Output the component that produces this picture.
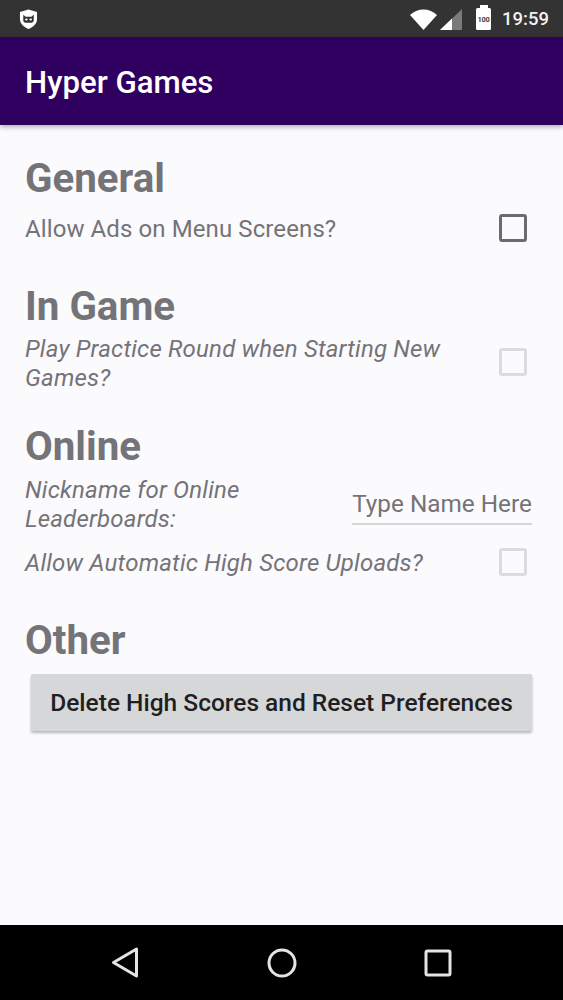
<script>
</script>

<div class="phone">
  <header class="status">
    <svg class="shield" viewBox="0 0 20 22" width="19" height="22">
      <path d="M10 1 L19 3.5 V11 C19 16 15 19.5 10 21.5 C5 19.5 1 16 1 11 V3.5 Z" fill="#fff"/>
      <path d="M4.5 6.5 L7 8.5 H13 L15.5 6.5 V12.5 C15.5 14 14 15 12 15 H8 C6 15 4.5 14 4.5 12.5 Z" fill="#333"/>
      <rect x="6.5" y="10.5" width="2.6" height="2" rx="1" fill="#fff"/>
      <rect x="11" y="10.5" width="2.6" height="2" rx="1" fill="#fff"/>
    </svg>
    <div class="status-right">
      <svg class="wifi" viewBox="0 0 27 21" width="27" height="21">
        <path d="M0 6 C7 -1.5 20 -1.5 27 6 L13.5 21 Z" fill="#fff"/>
      </svg>
      <svg class="signal" viewBox="0 0 22 21" width="22" height="21">
        <path d="M0 21 L22 0 V21 Z" fill="#7a7a7a"/>
        <path d="M0 21 L12 9.5 V21 Z" fill="#fff"/>
      </svg>
      <div class="battery"><span>100</span></div>
      <span class="clock">19:59</span>
    </div>
  </header>

  <div class="appbar">Hyper Games</div>

  <main class="content">
    <h2 class="first">General</h2>
    <div class="row one">
      <span class="label">Allow Ads on Menu Screens?</span>
      <span class="check dark"></span>
    </div>

    <h2 class="ingame">In Game</h2>
    <div class="row two">
      <span class="label it">Play Practice Round when Starting New Games?</span>
      <span class="check"></span>
    </div>

    <h2 class="online">Online</h2>
    <div class="row nick">
      <span class="label it narrow">Nickname for Online Leaderboards:</span>
      <span class="field">Type Name Here</span>
    </div>
    <div class="row uploads">
      <span class="label it">Allow Automatic High Score Uploads?</span>
      <span class="check"></span>
    </div>

    <h2 class="other">Other</h2>
    <button class="reset">Delete High Scores and Reset Preferences</button>
  </main>

  <nav class="nav">
    <svg viewBox="0 0 30 34" width="30" height="34">
      <path d="M26.5 3 V30 L3.5 16.5 Z" fill="none" stroke="#e4e4e4" stroke-width="3" stroke-linejoin="round"/>
    </svg>
    <svg viewBox="0 0 30 30" width="30" height="30">
      <circle cx="15" cy="15" r="13" fill="none" stroke="#e4e4e4" stroke-width="3"/>
    </svg>
    <svg viewBox="0 0 28 28" width="28" height="28">
      <rect x="2" y="2" width="24" height="24" rx="1.5" fill="none" stroke="#e4e4e4" stroke-width="3"/>
    </svg>
  </nav>
</div>

<style>
  :global(body) { margin: 0; background: #fbfafd; }
  .phone {
    width: 563px;
    height: 1000px;
    display: flex;
    flex-direction: column;
    overflow: hidden;
    font-family: Roboto, "Liberation Sans", sans-serif;
    background: #fbfafd;
  }
  .status {
    height: 37px;
    flex: none;
    background: #333333;
    display: flex;
    align-items: center;
    justify-content: space-between;
    padding: 0 14px 0 19px;
    box-sizing: border-box;
  }
  .shield { margin-top: 1px; }
  .status-right { display: flex; align-items: center; }
  .wifi { margin-right: 3px; margin-top: 2px; }
  .signal { margin-right: 14px; margin-top: 2px; }
  .battery {
    width: 15px;
    height: 22px;
    margin-top: 1px;
    background: #fff;
    border-radius: 1.5px;
    position: relative;
    margin-right: 11px;
    display: flex;
    align-items: center;
    justify-content: center;
  }
  .battery::before {
    content: "";
    position: absolute;
    top: -3px;
    left: 3.5px;
    width: 8px;
    height: 3px;
    background: #fff;
  }
  .battery span { font-size: 7.5px; font-weight: 700; color: #444; letter-spacing: -0.2px; }
  .clock { color: #f2f2f2; font-size: 18.5px; font-weight: 500; }
  .appbar {
    height: 88px;
    flex: none;
    box-sizing: border-box;
    background: #300060;
    color: #fff;
    font-size: 31.2px;
    font-weight: 500;
    line-height: 92px;
    padding-left: 25px;
    box-shadow: 0 2px 5px rgba(0, 0, 0, 0.3);
    position: relative;
  }
  .content {
    flex: 1;
    padding: 0 31px 0 25px;
    display: flex;
    flex-direction: column;
    color: #747378;
  }
  h2 {
    margin: 0;
    font-size: 40.3px;
    font-weight: 700;
    line-height: 46px;
    color: #747378;
  }
  .first { margin-top: 31px; }
  .ingame { margin-top: 33px; }
  .online { margin-top: 30px; }
  .other { margin-top: 33px; }
  .row {
    display: flex;
    align-items: center;
    justify-content: space-between;
  }
  .one { margin-top: 5px; height: 44px; }
  .two { height: 60px; margin-top: 4px; }
  .nick { height: 60px; margin-top: 5px; }
  .uploads { height: 44px; margin-top: 6px; }
  .label { font-size: 24px; line-height: 29px; letter-spacing: 0.1px; }
  .it { font-style: italic; max-width: 440px; letter-spacing: 0.19px; }
  .narrow { max-width: 290px; }
  .check {
    width: 28px;
    height: 28px;
    box-sizing: border-box;
    border: 3px solid #dcdbde;
    border-radius: 3px;
    flex: none;
    margin-right: 5px;
    margin-bottom: 2px;
  }
  .two .check { margin-bottom: 4px; }
  .check.dark { border-color: #6c6c70; }
  .field {
    width: 180px;
    box-sizing: border-box;
    font-size: 24.3px;
    line-height: 32px;
    height: 37px;
    border-bottom: 2px solid #d6d5d8;
    text-align: center;
    flex: none;
    margin-top: 3px;
    white-space: nowrap;
  }
  .reset {
    margin: 10px 0 0 6px;
    height: 57px;
    border: none;
    border-radius: 2px;
    background: #d6d7d9;
    color: #1f1f21;
    font-family: inherit;
    font-size: 24.5px;
    font-weight: 500;
    padding: 0;
    box-shadow: 0 2px 3px rgba(0, 0, 0, 0.28);
  }
  .nav {
    height: 75px;
    flex: none;
    background: #000;
    display: flex;
    align-items: center;
    padding: 0 111px 0 110px;
    justify-content: space-between;
    box-sizing: border-box;
  }
</style>
